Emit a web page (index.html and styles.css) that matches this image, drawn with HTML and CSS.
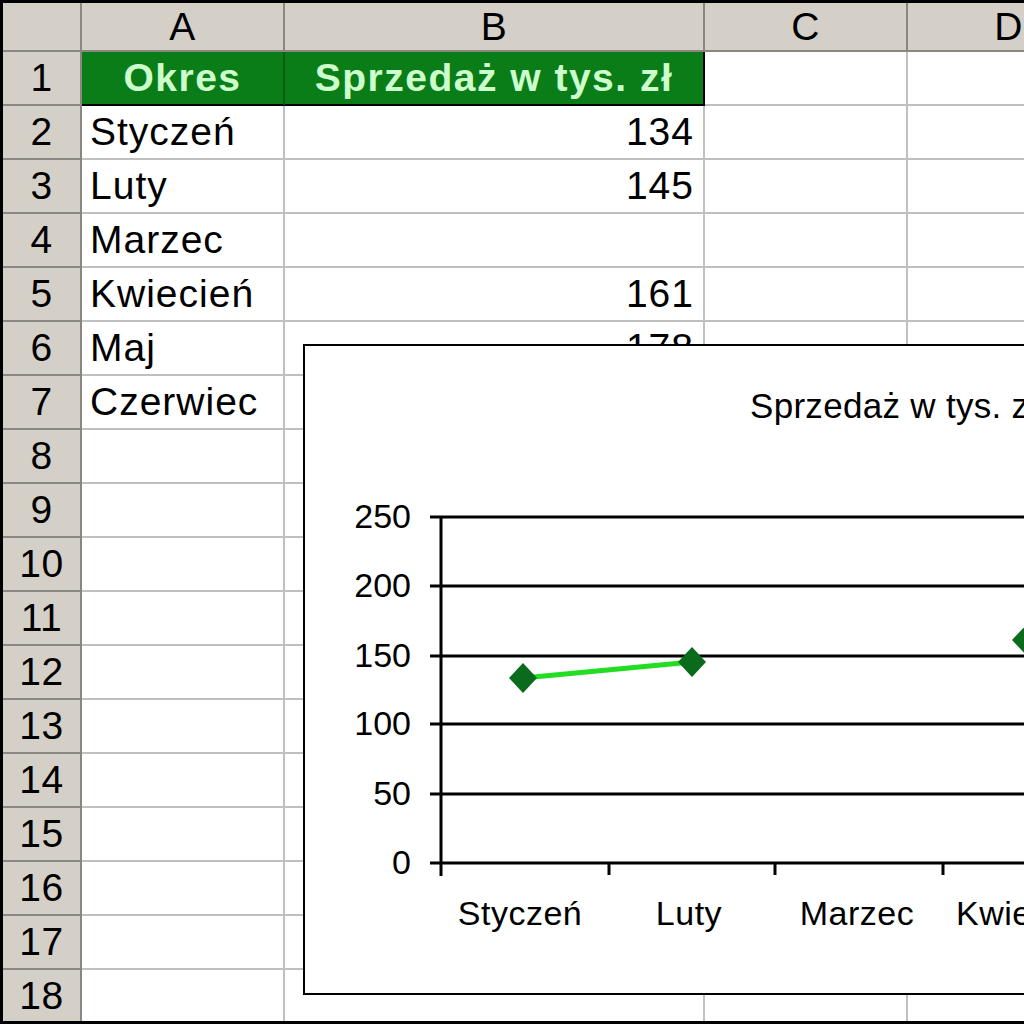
FILE: index.html
```html
<!DOCTYPE html>
<html lang="pl">

<head>
    <meta charset="UTF-8">
    <title>Sprzedaż w tys. zł</title>
    <link rel="stylesheet" href="styles.css">
</head>

<body>

    <div class="frame">
        <div class="sheet">
            <!-- nagłówki kolumn -->
            <div class="cell hd"></div>
            <div class="cell hd">A</div>
            <div class="cell hd">B</div>
            <div class="cell hd">C</div>
            <div class="cell hd">D</div>

            <div class="cell hd">1</div>
            <div class="cell title first">Okres</div>
            <div class="cell title last">Sprzedaż w tys. zł</div>
            <div class="cell"></div>
            <div class="cell"></div>

            <div class="cell hd">2</div>
            <div class="cell">Styczeń</div>
            <div class="cell num">134</div>
            <div class="cell"></div>
            <div class="cell"></div>

            <div class="cell hd">3</div>
            <div class="cell">Luty</div>
            <div class="cell num">145</div>
            <div class="cell"></div>
            <div class="cell"></div>

            <div class="cell hd">4</div>
            <div class="cell">Marzec</div>
            <div class="cell num"></div>
            <div class="cell"></div>
            <div class="cell"></div>

            <div class="cell hd">5</div>
            <div class="cell">Kwiecień</div>
            <div class="cell num">161</div>
            <div class="cell"></div>
            <div class="cell"></div>

            <div class="cell hd">6</div>
            <div class="cell">Maj</div>
            <div class="cell num">178</div>
            <div class="cell"></div>
            <div class="cell"></div>

            <div class="cell hd">7</div>
            <div class="cell">Czerwiec</div>
            <div class="cell num">190</div>
            <div class="cell"></div>
            <div class="cell"></div>

            <div class="cell hd">8</div><div class="cell"></div><div class="cell"></div><div class="cell"></div><div class="cell"></div>
            <div class="cell hd">9</div><div class="cell"></div><div class="cell"></div><div class="cell"></div><div class="cell"></div>
            <div class="cell hd">10</div><div class="cell"></div><div class="cell"></div><div class="cell"></div><div class="cell"></div>
            <div class="cell hd">11</div><div class="cell"></div><div class="cell"></div><div class="cell"></div><div class="cell"></div>
            <div class="cell hd">12</div><div class="cell"></div><div class="cell"></div><div class="cell"></div><div class="cell"></div>
            <div class="cell hd">13</div><div class="cell"></div><div class="cell"></div><div class="cell"></div><div class="cell"></div>
            <div class="cell hd">14</div><div class="cell"></div><div class="cell"></div><div class="cell"></div><div class="cell"></div>
            <div class="cell hd">15</div><div class="cell"></div><div class="cell"></div><div class="cell"></div><div class="cell"></div>
            <div class="cell hd">16</div><div class="cell"></div><div class="cell"></div><div class="cell"></div><div class="cell"></div>
            <div class="cell hd">17</div><div class="cell"></div><div class="cell"></div><div class="cell"></div><div class="cell"></div>
            <div class="cell hd">18</div><div class="cell"></div><div class="cell"></div><div class="cell"></div><div class="cell"></div>
        </div>

        <!-- wykres leży nad arkuszem -->
        <div class="chart">
            <svg class="plot" width="796" height="647" viewBox="305 346 796 647">
                <text class="chart-title" x="750" y="418">Sprzedaż w tys. zł</text>

                <g class="grid">
                    <line x1="430" y1="517" x2="1110" y2="517" />
                    <line x1="430" y1="586" x2="1110" y2="586" />
                    <line x1="430" y1="656" x2="1110" y2="656" />
                    <line x1="430" y1="724" x2="1110" y2="724" />
                    <line x1="430" y1="794" x2="1110" y2="794" />
                    <line x1="430" y1="863" x2="1110" y2="863" />
                    <line x1="441" y1="516" x2="441" y2="876" />
                    <line x1="609" y1="863" x2="609" y2="875" />
                    <line x1="775" y1="863" x2="775" y2="875" />
                    <line x1="943" y1="863" x2="943" y2="875" />
                </g>

                <g class="ylab">
                    <text x="411" y="528">250</text>
                    <text x="411" y="597">200</text>
                    <text x="411" y="667">150</text>
                    <text x="411" y="735">100</text>
                    <text x="411" y="805">50</text>
                    <text x="411" y="874">0</text>
                </g>

                <g class="xlab">
                    <text x="520" y="925">Styczeń</text>
                    <text x="689" y="925">Luty</text>
                    <text x="857" y="925">Marzec</text>
                    <text x="1026" y="925">Kwiecień</text>
                </g>

                <polyline class="series" points="523,678 692,662" />
                <polyline class="series" points="1026,640 1193,617" />

                <g class="marker">
                    <polygon points="523,663 537,678 523,693 509,678" />
                    <polygon points="692,647 706,662 692,677 678,662" />
                    <polygon points="1026,625 1040,640 1026,655 1012,640" />
                </g>
            </svg>
        </div>
    </div>

</body>

</html>
```

FILE: styles.css
```css
* {
    margin: 0px;
    padding: 0px;
}

body {
    background-color: #fff;
    font-family: "Liberation Sans", Arial, sans-serif;
}

.frame {
    width: 1024px;
    height: 1024px;
    box-sizing: border-box;
    border: 3px solid #000;
    border-right: none;
    position: relative;
    overflow: hidden;
    background-color: #fff;
}

.sheet {
    display: grid;
    grid-template-columns: 79px 203px 420px 203px 203px;
    grid-template-rows: 49px repeat(18, 54px);
}

.cell {
    box-sizing: border-box;
    border-right: 2px solid #c0c0c0;
    border-bottom: 2px solid #c0c0c0;
    display: flex;
    align-items: center;
    padding: 0 8px;

    font-size: 39px;
    letter-spacing: 1px;
    color: #000;
    white-space: nowrap;
    overflow: hidden;
}

.cell.hd {
    background-color: #d4d0c8;
    border-color: #8a8780;
    justify-content: center;
    padding: 0;
    letter-spacing: 0.5px;
}

.cell.num {
    justify-content: flex-end;
    padding-right: 9px;
}

/* nagłówek tabeli A1:B1 */
.cell.title {
    background-color: #0b7d18;
    color: #ccffcc;
    font-weight: 700;
    letter-spacing: 1.5px;
    justify-content: center;
    border-bottom: 2px solid #000;
}

.cell.title.first {
    border-right: 2px solid #06600f;
}

.cell.title.last {
    border-right: 2px solid #000;
}

.chart {
    position: absolute;
    left: 300px;
    top: 341px;
    width: 800px;
    height: 651px;
    box-sizing: border-box;
    border: 2px solid #000;
    background-color: #fff;
}

.plot {
    display: block;
}

.plot text {
    font-family: "Liberation Sans", Arial, sans-serif;
    fill: #000;
}

.chart-title {
    font-size: 35px;
    letter-spacing: 0.3px;
}

.grid line {
    stroke: #000;
    stroke-width: 3;
}

.ylab text {
    font-size: 34px;
    text-anchor: end;
}

.xlab text {
    font-size: 34px;
    letter-spacing: 0.5px;
    text-anchor: middle;
}

.series {
    fill: none;
    stroke: #22dd22;
    stroke-width: 5;
}

.marker polygon {
    fill: #0b6b1c;
}
```
